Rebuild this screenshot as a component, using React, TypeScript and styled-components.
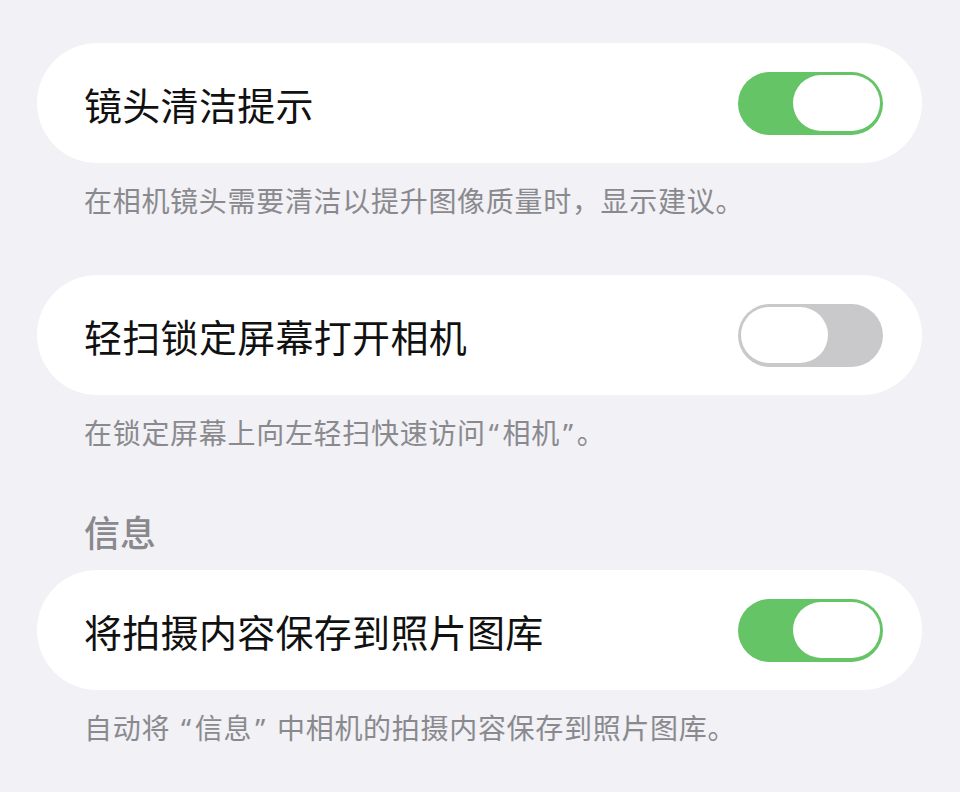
import styled, { createGlobalStyle } from "styled-components";

const GlobalStyle = createGlobalStyle`
    html, body {
        margin: 0;
        padding: 0;
        background: #f1f1f6;
    }
    body {
        font-family: "Noto Sans CJK SC", "Noto Sans", sans-serif;
    }
`;

const Page = styled.div`
    width: 960px;
    height: 792px;
    overflow: hidden;
    padding: 43px 38px 0 37px;
    box-sizing: border-box;
    background: #f1f1f6;
`;

const Card = styled.div`
    height: 120px;
    background: #ffffff;
    border-radius: 60px;
    display: flex;
    align-items: center;
    justify-content: space-between;
    padding: 0 39px 0 47px;
    box-sizing: border-box;
`;

const Label = styled.span`
    font-size: 38px;
    color: #111111;
    letter-spacing: 0.3px;
`;

const Footer = styled.div<{ $gap: number }>`
    font-size: 28px;
    line-height: 40px;
    color: #8a8a8e;
    padding: 17px 0 0 47px;
    margin-bottom: ${(p) => p.$gap}px;
    letter-spacing: 0.7px;
`;

// 引号用西文字体，宽度更窄
const Quote = styled.span`
    font-family: "Noto Sans", sans-serif;
    margin: 0 3px;
`;

const Header = styled.div`
    font-size: 36px;
    line-height: 48px;
    font-weight: 500;
    color: #88888d;
    padding-left: 47px;
    margin-bottom: 15px;
`;

const Track = styled.div<{ $on: boolean }>`
    width: 145px;
    height: 63px;
    border-radius: 32px;
    background: ${(p) => (p.$on ? "#64c466" : "#c9c9cb")};
    display: flex;
    align-items: center;
    justify-content: ${(p) => (p.$on ? "flex-end" : "flex-start")};
    padding: 0 3px;
    box-sizing: border-box;
`;

const Knob = styled.div`
    width: 87px;
    height: 56px;
    border-radius: 28px;
    background: #ffffff;
`;

function Toggle({ on }: { on: boolean }) {
    return (
        <Track $on={on}>
            <Knob />
        </Track>
    );
}

function App() {
    return (
        <>
            <GlobalStyle />
            <Page>
                <Card>
                    <Label>镜头清洁提示</Label>
                    <Toggle on />
                </Card>
                <Footer $gap={55}>在相机镜头需要清洁以提升图像质量时，显示建议。</Footer>
                <Card>
                    <Label>轻扫锁定屏幕打开相机</Label>
                    <Toggle on={false} />
                </Card>
                <Footer $gap={54}>
                    在锁定屏幕上向左轻扫快速访问<Quote>“</Quote>相机<Quote>”</Quote>。
                </Footer>
                <Header>信息</Header>
                <Card>
                    <Label>将拍摄内容保存到照片图库</Label>
                    <Toggle on />
                </Card>
                <Footer $gap={0}>
                    自动将<Quote> “</Quote>信息<Quote>” </Quote>中相机的拍摄内容保存到照片图库。
                </Footer>
            </Page>
        </>
    );
}

export default App;
